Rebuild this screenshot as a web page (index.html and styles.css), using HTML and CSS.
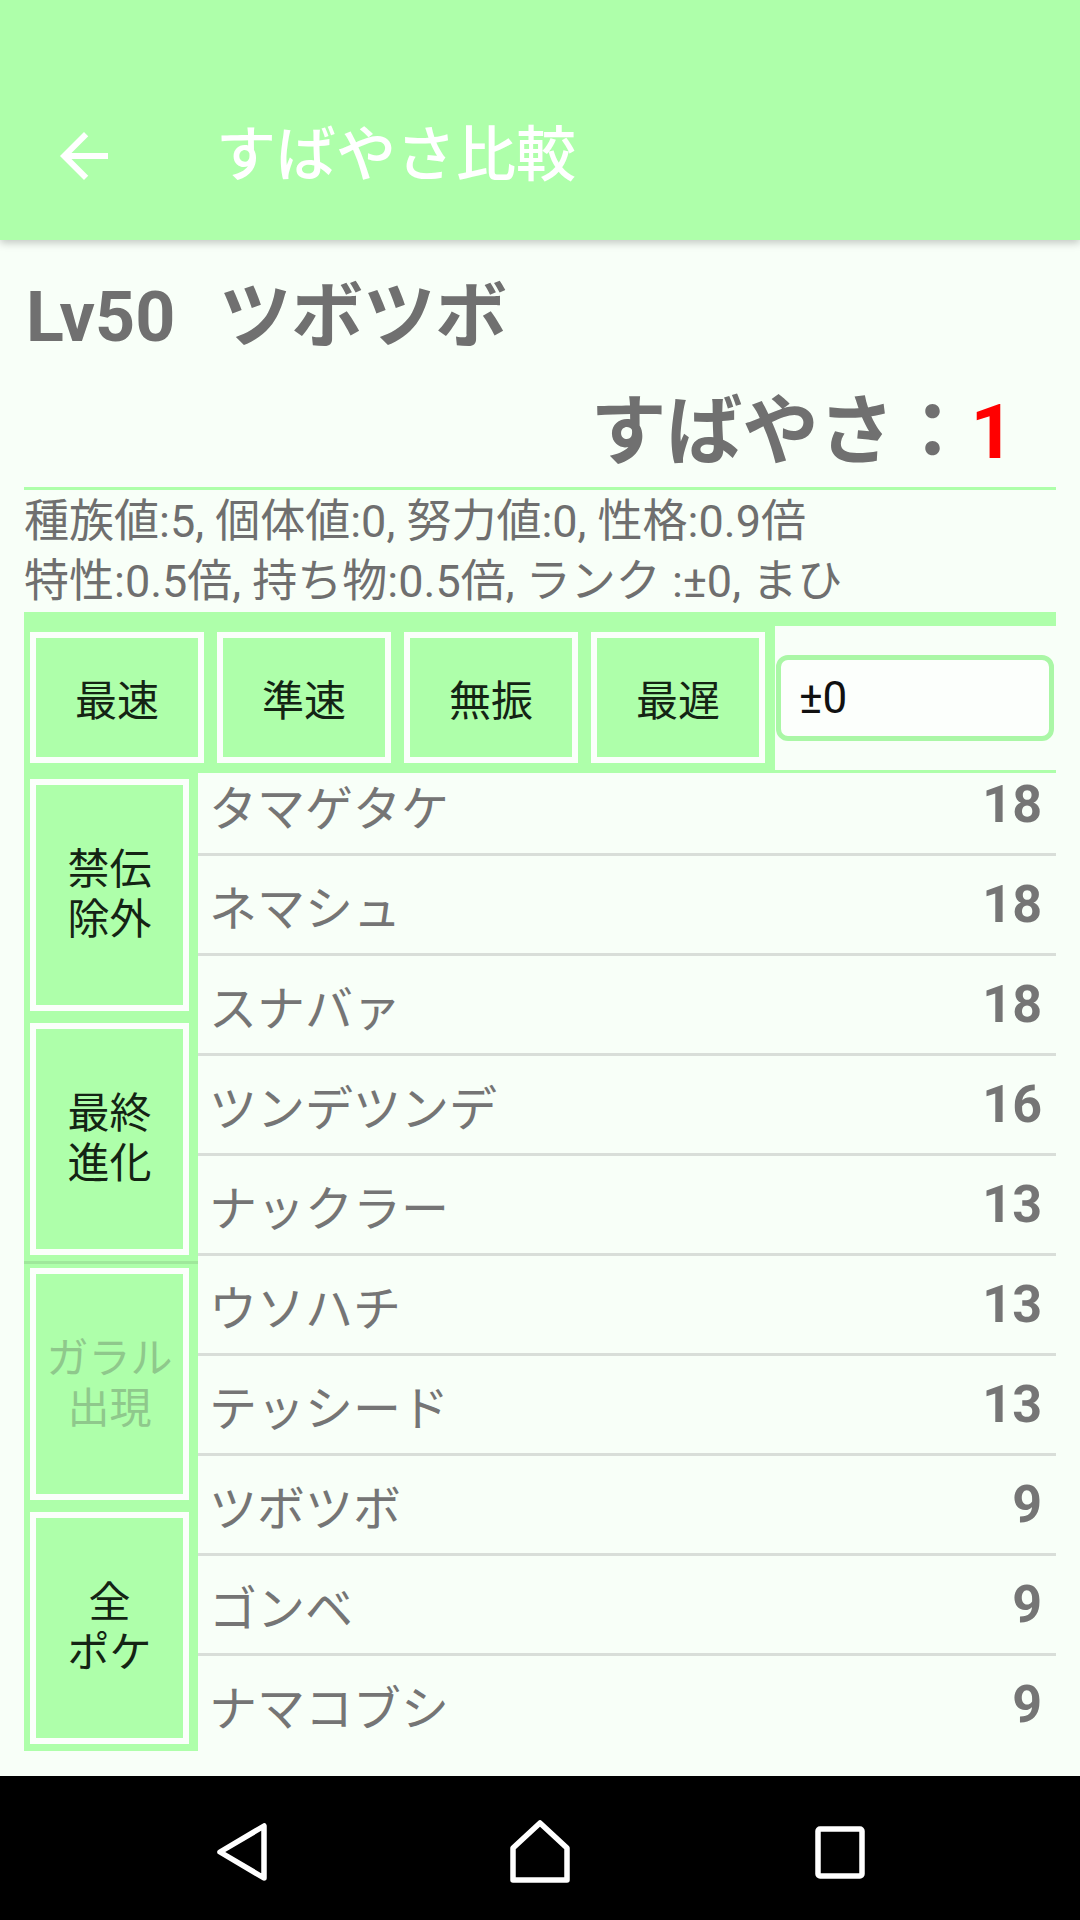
FILE: index.html
```html
<!DOCTYPE html>
<html lang="ja">
<head>
<meta charset="utf-8">
<title>すばやさ比較</title>
<link rel="stylesheet" href="styles.css">
</head>
<body>
<div class="screen">
  <div class="appbar">
    <div class="statusbar"></div>
    <div class="toolbar">
      <div class="nav-icon">
        <svg viewBox="0 0 24 24" width="72" height="72"><path fill="#ffffff" d="M20 11H7.83l5.59-5.59L12 4l-8 8 8 8 1.41-1.41L7.83 13H20v-2z"/></svg>
      </div>
      <div class="toolbar-title">すばやさ比較</div>
    </div>
  </div>

  <div class="content">
    <div class="name-row"><span class="lv">Lv50</span><span class="pname">ツボツボ</span></div>
    <div class="speed-row">すばやさ：<span class="speed-val">1</span></div>
    <div class="rule"></div>
    <div class="info">
      <div class="info-line">種族値:5, 個体値:0, 努力値:0, 性格:0.9倍</div>
      <div class="info-line">特性:0.5倍, 持ち物:0.5倍, ランク :±0, まひ</div>
    </div>

    <div class="controls">
      <div class="preset-group">
        <div class="btn preset">最速</div>
        <div class="btn preset">準速</div>
        <div class="btn preset">無振</div>
        <div class="btn preset">最遅</div>
      </div>
      <div class="rank-cell">
        <div class="rank-input">±0</div>
      </div>
    </div>

    <div class="list-area">
      <div class="filter-col">
        <div class="btn filter">禁伝<br>除外</div>
        <div class="btn filter gap">最終<br>進化</div>
        <div class="filter-divider"></div>
        <div class="btn filter disabled">ガラル<br>出現</div>
        <div class="btn filter gap">全<br>ポケ</div>
      </div>
      <div class="rows-clip">
        <div class="rows">
          <div class="row"><span class="rname">タマゲタケ</span><span class="rval">18</span></div>
          <div class="row"><span class="rname">ネマシュ</span><span class="rval">18</span></div>
          <div class="row"><span class="rname">スナバァ</span><span class="rval">18</span></div>
          <div class="row"><span class="rname">ツンデツンデ</span><span class="rval">16</span></div>
          <div class="row"><span class="rname">ナックラー</span><span class="rval">13</span></div>
          <div class="row"><span class="rname">ウソハチ</span><span class="rval">13</span></div>
          <div class="row"><span class="rname">テッシード</span><span class="rval">13</span></div>
          <div class="row"><span class="rname">ツボツボ</span><span class="rval">9</span></div>
          <div class="row"><span class="rname">ゴンベ</span><span class="rval">9</span></div>
          <div class="row"><span class="rname">ナマコブシ</span><span class="rval">9</span></div>
        </div>
      </div>
    </div>
  </div>

  <div class="navbar">
    <svg class="nav-svg" viewBox="0 0 1080 144" width="1080" height="144">
      <path d="M264 50 L264 102 L220 76 Z" fill="none" stroke="#fff" stroke-width="5.5" stroke-linejoin="round"/>
      <path d="M540 47 L567 72 L567 104 L513 104 L513 72 Z" fill="none" stroke="#fff" stroke-width="5.5" stroke-linejoin="round"/>
      <rect x="818" y="53" width="44" height="47" rx="2" fill="none" stroke="#fff" stroke-width="5.5"/>
    </svg>
  </div>
</div>
</body>
</html>
```

FILE: styles.css
```css
* { box-sizing: border-box; }
html, body { margin: 0; padding: 0; }
body {
  width: 1080px;
  height: 1920px;
  overflow: hidden;
  background: #f8fff8;
  font-family: Roboto, "Noto Sans CJK JP", sans-serif;
}
.screen {
  width: 1080px;
  height: 1920px;
  display: flex;
  flex-direction: column;
  background: #f8fff8;
}
.appbar {
  background: #aeffaa;
  box-shadow: 0 3px 8px rgba(0,0,0,0.22);
  position: relative;
  z-index: 2;
}
.statusbar { height: 72px; }
.toolbar {
  height: 168px;
  display: flex;
  align-items: center;
}
.nav-icon {
  width: 72px;
  height: 72px;
  margin-left: 48px;
  display: flex;
}
.toolbar-title {
  margin-left: 96px;
  color: #ffffff;
  font-size: 60px;
  font-weight: 500;
  line-height: 1;
}
.content {
  flex: 1;
  padding: 0 24px;
  display: flex;
  flex-direction: column;
}
.name-row {
  margin-top: 27px;
  height: 100px;
  line-height: 100px;
  color: #707070;
  font-weight: 700;
  white-space: nowrap;
}
.lv { font-size: 70px; margin-left: 2px; }
.pname { font-size: 72px; margin-left: 44px; }
.speed-row {
  margin-top: 15px;
  height: 100px;
  line-height: 100px;
  text-align: right;
  padding-right: 42px;
  font-size: 76px;
  font-weight: 700;
  color: #707070;
}
.speed-val { color: #ff0000; }
.rule {
  margin-top: 5px;
  height: 3px;
  background: #aeffaa;
}
.info {
  margin-top: 2px;
  color: #6f6f6f;
  font-size: 45px;
}
.info-line {
  height: 60px;
  line-height: 60px;
  white-space: nowrap;
}
.controls {
  display: flex;
  background: #aeffaa;
  padding-top: 14px;
  padding-bottom: 3px;
}
.preset-group {
  display: flex;
  gap: 13px;
  padding: 6px 10px 7px 6px;
}
.btn {
  background: #aeffaa;
  border: 6px solid #fbfffb;
  display: flex;
  align-items: center;
  justify-content: center;
  text-align: center;
  color: #142414;
  font-size: 42px;
}
.preset {
  width: 174px;
  height: 131px;
}
.rank-cell {
  flex: 1;
  background: #f8fff8;
  display: flex;
  align-items: center;
  padding: 0 2px 0 1px;
}
.rank-input {
  width: 100%;
  height: 86px;
  border: 5px solid #aaf7a6;
  border-radius: 12px;
  background: #fcfffc;
  font-size: 44px;
  color: #111;
  display: flex;
  align-items: center;
  padding-left: 18px;
}
.list-area {
  display: flex;
  height: 978px;
}
.filter-col {
  width: 174px;
  background: #aeffaa;
  padding: 6px 9px 7px 6px;
  display: flex;
  flex-direction: column;
}
.filter {
  height: 232px;
  line-height: 50px;
  flex-shrink: 0;
}
.filter.gap { margin-top: 12px; }
.filter-divider {
  height: 3px;
  margin: 6px -9px 4px -6px;
  background: #9fe89b;
  flex-shrink: 0;
}
.filter.disabled { color: #8fc88c; }
.rows-clip {
  flex: 1;
  overflow: hidden;
}
.rows {
  margin-top: -17px;
}
.row {
  height: 100px;
  border-bottom: 3px solid #d9ded9;
  display: flex;
  align-items: center;
  justify-content: space-between;
  padding: 0 14px 0 11px;
}
.rname {
  font-size: 48px;
  color: #757575;
}
.rval {
  font-size: 52px;
  font-weight: 700;
  color: #757575;
}
.navbar {
  height: 144px;
  background: #000;
  margin-top: 25px;
  display: flex;
}
.nav-svg { display: block; }
```
